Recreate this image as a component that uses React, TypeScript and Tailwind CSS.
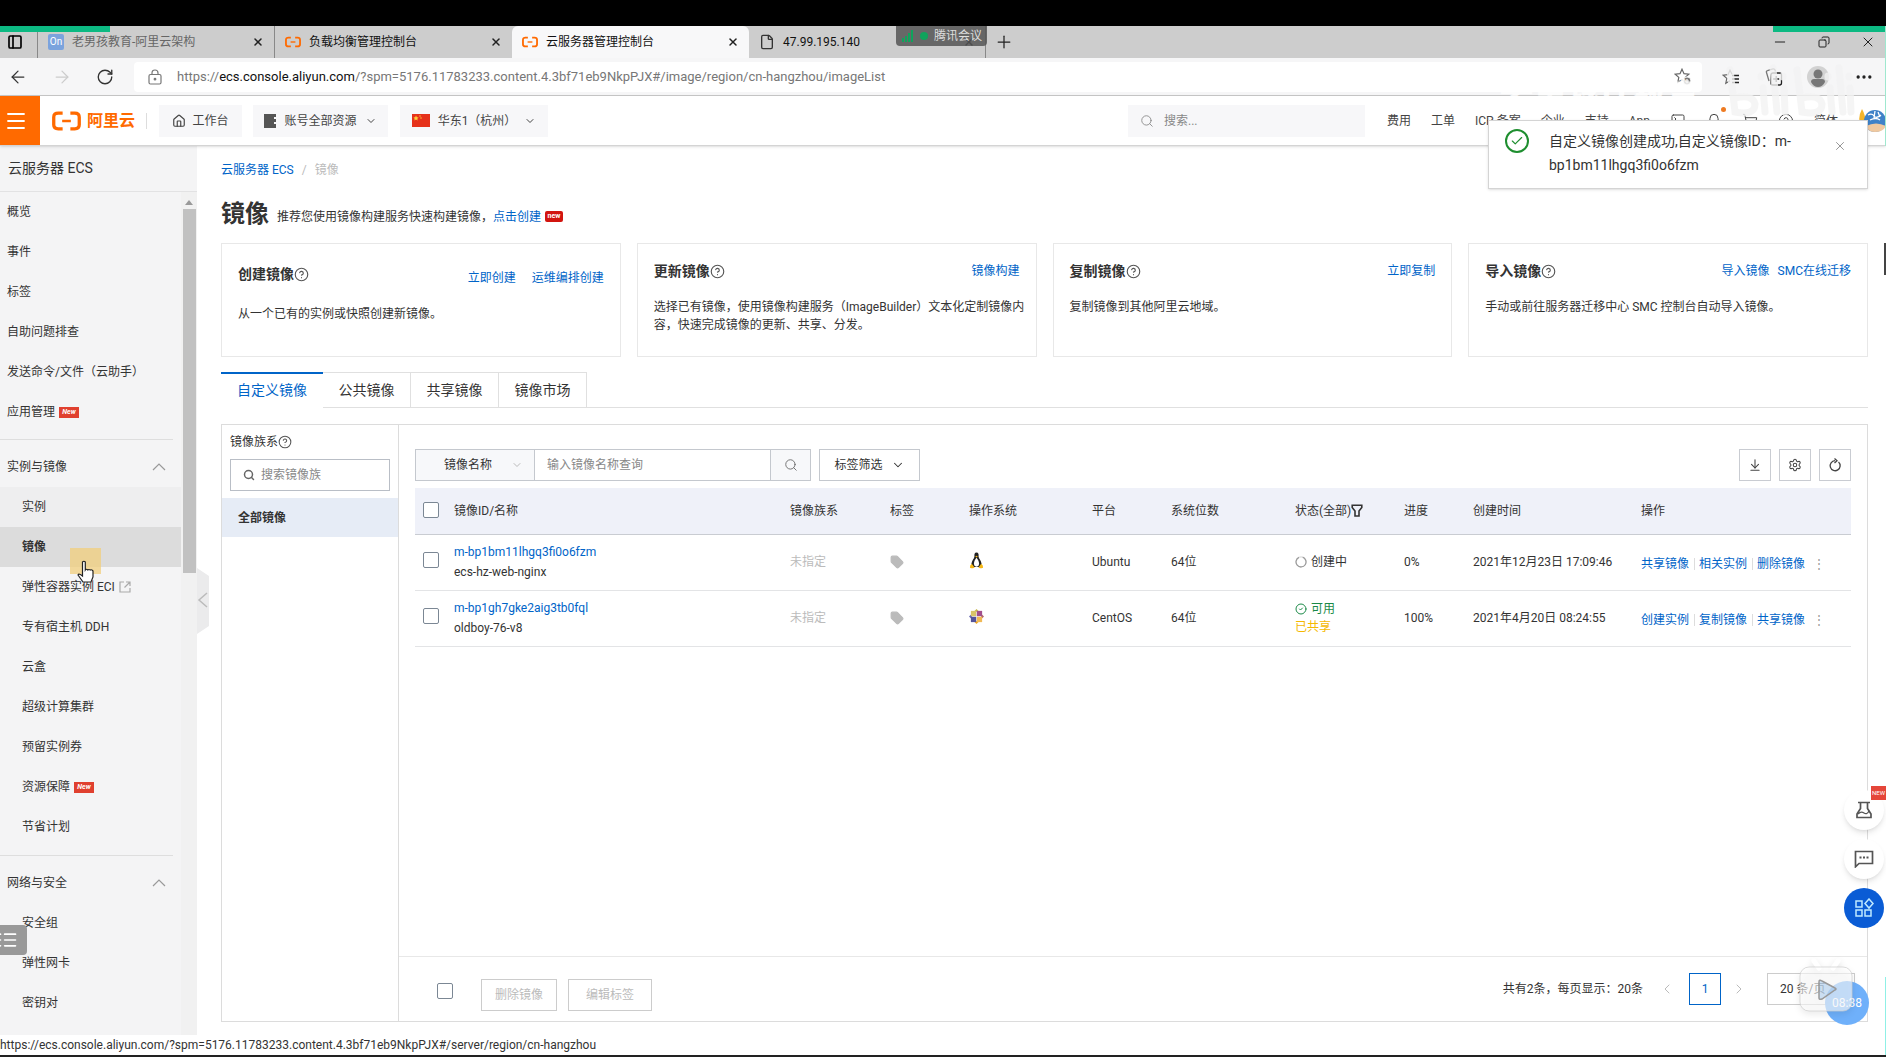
import React from 'react';
import {
  ArrowLeft, ArrowRight, RotateCw, X, Plus, Minus, File, PanelLeft, Copy, MoreHorizontal,
  Menu, House, ChevronDown, ChevronLeft, ChevronRight, Search, CircleHelp, Bell, SquareTerminal,
  ShoppingCart, Tag, ArrowDownToLine, Settings, Check, List, CircleCheck,
} from 'lucide-react';

const cards = [
  { title: '创建镜像', links: ['立即创建', '运维编排创建'], text: '从一个已有的实例或快照创建新镜像。', first: true },
  { title: '更新镜像', links: ['镜像构建'], text: '选择已有镜像，使用镜像构建服务（ImageBuilder）文本化定制镜像内容，快速完成镜像的更新、共享、分发。' },
  { title: '复制镜像', links: ['立即复制'], text: '复制镜像到其他阿里云地域。' },
  { title: '导入镜像', links: ['导入镜像', 'SMC在线迁移'], text: '手动或前往服务器迁移中心 SMC 控制台自动导入镜像。' },
];

const topItems = [
  { name: '概览' },
  { name: '事件' },
  { name: '标签' },
  { name: '自助问题排查' },
  { name: '发送命令/文件（云助手）' },
  { name: '应用管理', isNew: true },
];

const instanceItems = [
  { name: '实例', hover: true },
  { name: '镜像', active: true },
  { name: '弹性容器实例 ECI', external: true },
  { name: '专有宿主机 DDH' },
  { name: '云盒' },
  { name: '超级计算集群' },
  { name: '预留实例券' },
  { name: '资源保障', isNew: true },
  { name: '节省计划' },
];

const networkItems = [{ name: '安全组' }, { name: '弹性网卡' }, { name: '密钥对' }];

const images = [
  {
    id: 'm-bp1bm11lhgq3fi0o6fzm', name: 'ecs-hz-web-nginx', platform: 'Ubuntu', progress: '0%',
    time: '2021年12月23日 17:09:46', ready: false, actions: ['共享镜像', '相关实例', '删除镜像'],
  },
  {
    id: 'm-bp1gh7gke2aig3tb0fql', name: 'oldboy-76-v8', platform: 'CentOS', progress: '100%',
    time: '2021年4月20日 08:24:55', ready: true, actions: ['创建实例', '复制镜像', '共享镜像'],
  },
];

function AliLogo({ className }: { className: string }) {
  return (
    <svg viewBox="0 0 30 20" className={className} fill="none" stroke="#ff6a00" strokeWidth="3.4">
      <path d="M11 1.8H6.5Q1.8 1.8 1.8 6v8q0 4.2 4.7 4.2H11" />
      <path d="M19 1.8h4.5q4.7 0 4.7 4.2v8q0 4.2-4.7 4.2H19" />
      <path d="M10.5 10h9" strokeWidth="2.6" />
    </svg>
  );
}

function Tux() {
  return (
    <svg viewBox="0 0 16 18" className="w-[15px] h-[17px]">
      <path d="M8 0.5C5.8 0.5 5.6 2.4 5.8 4.6C5.8 6.4 3 9 2.6 12.5L4 16h8l1.4-3.5C13 9 10.2 6.4 10.2 4.6C10.4 2.4 10.2 0.5 8 0.5Z" fill="#222" />
      <path d="M8 6C6.6 7.6 5.2 10 5.2 12.6Q5.4 15.4 8 15.6Q10.6 15.4 10.8 12.6C10.8 10 9.4 7.6 8 6Z" fill="#fff" />
      <path d="M6.6 4.6L8 4l1.4.6L8 5.9Z" fill="#f5b817" />
      <path d="M3 12.4L6 16.4Q4.6 18 1 16.6Q.6 14 3 12.4ZM13 12.4L10 16.4Q11.4 18 15 16.6Q15.4 14 13 12.4Z" fill="#f5b817" />
    </svg>
  );
}

function CentOs() {
  return (
    <svg viewBox="0 0 16 16" className="w-[15px] h-[15px]">
      <path d="M8 0l3 3H5Z" fill="#c8b84a" />
      <path d="M16 8l-3 3V5Z" fill="#b46a6a" />
      <path d="M8 16l-3-3h6Z" fill="#efa724" />
      <path d="M0 8l3-3v6Z" fill="#6a6ab0" />
      <path d="M2 2h5.7v5.7H2Z" fill="#d9c568" />
      <path d="M8.3 2H14v5.7H8.3Z" fill="#a14f8c" />
      <path d="M8.3 8.3H14V14H8.3Z" fill="#f1b955" />
      <path d="M2 8.3h5.7V14H2Z" fill="#54549a" />
    </svg>
  );
}

function StarAdd() {
  return (
    <svg viewBox="0 0 18 18" className="w-[18px] h-[18px]" fill="none" stroke="#666" strokeWidth="1.2">
      <path d="M8 1.2l2 4.5 4.8.5-3.6 3.2 1 4.8L8 11.8l-4.2 2.4 1-4.8L1.2 6.2 6 5.7Z" />
      <circle cx="13" cy="13" r="4" fill="#777" stroke="#fff" />
      <path d="M13 11v4M11 13h4" stroke="#fff" />
    </svg>
  );
}

function StarList() {
  return (
    <svg viewBox="0 0 18 16" className="w-[18px] h-4" fill="none" stroke="#666" strokeWidth="1.2">
      <path d="M8 11.8l-4.2 2.4 1-4.8L1.2 6.2 6 5.7 8 1.2l2 4" />
      <path d="M10 6.5h7M10 10h7M10 13.5h7" stroke="#222" strokeWidth="1.4" />
    </svg>
  );
}

function Collections() {
  return (
    <svg viewBox="0 0 18 18" className="w-[18px] h-[18px]" fill="none" strokeWidth="1.3">
      <path d="M4 13L1.5 4.5Q1 3 2.5 2.6L8 1q1.5-.4 2 1l.5 1.5" stroke="#777" />
      <rect x="6" y="5" width="10.5" height="12" rx="2" stroke="#222" />
      <path d="M11.2 8v6M8.2 11h6" stroke="#222" />
    </svg>
  );
}

function NewBadge() {
  return (
    <span className="ml-1 w-5 h-[11px] bg-[#e0402f] text-white text-[7px] leading-[11px] font-bold italic text-center">New</span>
  );
}

function Tick({ label, className = '' }: { label: string; className?: string }) {
  return (
    <input
      type="checkbox"
      aria-label={label}
      className={`appearance-none block w-4 h-4 bg-white border border-[#7b8794] rounded-[2px] ${className}`}
    />
  );
}

function BrowserTab({ title, icon, active, muted, last }: {
  title: string; icon: React.ReactNode; active?: boolean; muted?: boolean; last?: boolean;
}) {
  return (
    <div
      className={`w-[237px] flex items-center gap-2 px-[10px] ${
        active ? 'bg-[#f8f8f9] rounded-t-md' : ''
      } ${muted || last ? 'border-r border-[#888]' : ''}`}
    >
      <span className="w-4 flex justify-center">{icon}</span>
      <span className={`flex-1 text-[12px] ${muted ? 'text-[#666]' : 'text-[#111]'}`}>{title}</span>
      <button aria-label="关闭标签页"><X className="w-3 h-3 text-[#222]" strokeWidth={3} /></button>
    </div>
  );
}

function Browser() {
  return (
    <header className="flex-shrink-0">
      <div className="h-[26px] bg-black" />
      <div className="h-8 bg-[#cdcdcd] flex">
        <div className="w-[38px] pr-2 flex items-center justify-center border-r border-[#888]">
          <PanelLeft className="w-4 h-4 text-black" strokeWidth={2.5} />
        </div>
        <BrowserTab
          title="老男孩教育-阿里云架构"
          muted
          icon={<span className="w-4 h-4 rounded-[2px] bg-[#7ba3dd] text-white text-[10px] leading-4 text-center">On</span>}
        />
        <BrowserTab title="负载均衡管理控制台" icon={<AliLogo className="w-4 h-3" />} />
        <BrowserTab title="云服务器管理控制台" active icon={<AliLogo className="w-4 h-3" />} />
        <BrowserTab title="47.99.195.140" last icon={<File className="w-4 h-4 text-[#333]" />} />
        <button className="px-2" aria-label="新建标签页"><Plus className="w-5 h-5 text-[#222]" strokeWidth={1.5} /></button>
        <div className="ml-auto flex items-center gap-[30px] pr-[10px] text-[#222]">
          <button aria-label="最小化"><Minus className="w-4 h-4" strokeWidth={1.5} /></button>
          <button aria-label="还原"><Copy className="w-3 h-3 -scale-x-100" strokeWidth={2} /></button>
          <button aria-label="关闭"><X className="w-4 h-4" strokeWidth={1.5} /></button>
        </div>
      </div>

      <div className="h-[38px] bg-[#f6f6f7] border-b border-[#c8c8c8] flex items-center">
        <div className="w-[134px] flex items-center gap-6 pl-2">
          <button aria-label="后退"><ArrowLeft className="w-5 h-5 text-[#333]" strokeWidth={1.5} /></button>
          <button aria-label="前进"><ArrowRight className="w-5 h-5 text-[#ccc]" strokeWidth={1.5} /></button>
          <button aria-label="刷新"><RotateCw className="w-[18px] h-[18px] text-[#333]" strokeWidth={1.8} /></button>
        </div>
        <div className="flex-1 h-[30px] bg-white rounded flex items-center pl-[14px] pr-[10px]">
          <svg viewBox="0 0 14 16" className="w-3.5 h-4" fill="none" stroke="#777" strokeWidth="1.2">
            <rect x="1" y="5.5" width="12" height="9.5" rx="1.5" />
            <path d="M4 5.5V4q0-3 3-3t3 3v1.5" />
            <circle cx="7" cy="10.2" r=".8" fill="#777" />
          </svg>
          <div className="ml-[15px] flex-1 text-[13px] text-[#777] whitespace-nowrap">
            https://<span className="text-[#111]">ecs.console.aliyun.com</span>/?spm=5176.11783233.content.4.3bf71eb9NkpPJX#/image/region/cn-hangzhou/imageList
          </div>
          <StarAdd />
        </div>
        <div className="w-[184px] pl-5 pr-3 flex items-center justify-between text-[#444]">
          <StarList />
          <Collections />
          <svg viewBox="0 0 22 22" className="w-[22px] h-[22px]">
            <circle cx="11" cy="11" r="11" fill="#d2d2d2" />
            <circle cx="11" cy="8" r="4.5" fill="#777" />
            <path d="M4 16q0-3 3-3h8q3 0 3 3q-2.5 5-7 5t-7-5Z" fill="#777" />
          </svg>
          <MoreHorizontal className="w-5 h-5 text-[#222]" />
        </div>
      </div>
    </header>
  );
}

function ConsoleHeader() {
  return (
    <header className="flex-shrink-0 h-[50px] bg-white flex items-center border-b border-[#d4d4d4] shadow-sm z-10 text-[12px] text-[#444]">
      <button className="w-10 h-full bg-[#ff6a00] text-white flex items-center justify-center" aria-label="菜单">
        <Menu className="w-6 h-6 -ml-2" strokeWidth={1.8} />
      </button>
      <a href="#" className="ml-3 w-[94px] flex items-center gap-1.5 text-[16px] font-bold text-[#ff6a00] whitespace-nowrap">
        <AliLogo className="w-[29px] h-5 flex-shrink-0" />阿里云
      </a>
      <span className="w-px h-4 bg-[#ddd]" />
      <button className="ml-3 w-[83px] h-8 bg-[#f7f7f9] flex items-center justify-center gap-1.5">
        <House className="w-3.5 h-3.5" />工作台
      </button>
      <button className="ml-[11px] w-[135px] h-8 bg-[#f7f7f9] flex items-center justify-center gap-2">
        <svg viewBox="0 0 12 14" className="w-3 h-3.5" fill="#555">
          <path d="M0 0h12v3h-2v2h2v3h-2v2h2v4H0Z" />
        </svg>
        账号全部资源
        <ChevronDown className="w-3 h-3" />
      </button>
      <button className="ml-3 w-[148px] h-8 bg-[#f7f7f9] flex items-center justify-center gap-2">
        <svg viewBox="0 0 18 13" className="w-[18px] h-[13px]">
          <rect width="18" height="13" fill="#e6321b" />
          <path d="M4 1.5l.8 1.7 1.8.2-1.3 1.3.3 1.8L4 5.6l-1.6.9.3-1.8L1.4 3.4l1.8-.2Z" fill="#ffd23b" />
          <circle cx="8" cy="2" r=".7" fill="#ffd23b" />
          <circle cx="9" cy="4" r=".7" fill="#ffd23b" />
        </svg>
        华东1（杭州）
        <ChevronDown className="w-3 h-3" />
      </button>

      <label className="ml-auto w-[237px] h-8 bg-[#f7f7f9] flex items-center px-3 gap-2.5">
        <Search className="w-3.5 h-3.5 text-[#888]" strokeWidth={1.5} />
        <input type="search" aria-label="搜索" placeholder="搜索..." className="flex-1 min-w-0 bg-transparent placeholder:text-[#888]" />
      </label>
      <nav className="ml-[22px] w-[499px] flex items-center gap-5 whitespace-nowrap *:flex-shrink-0">
        <a href="#">费用</a>
        <a href="#">工单</a>
        <a href="#">ICP 备案</a>
        <a href="#">企业</a>
        <a href="#">支持</a>
        <a href="#">App</a>
        <SquareTerminal className="w-4 h-4" strokeWidth={1.5} />
        <span className="relative">
          <Bell className="w-4 h-4" strokeWidth={1.5} />
          <span className="absolute -top-1.5 -right-1 w-[5px] h-[5px] rounded-full bg-[#ee7b22]" />
        </span>
        <ShoppingCart className="w-4 h-4" strokeWidth={1.5} />
        <CircleHelp className="w-4 h-4" strokeWidth={1.5} />
        <a href="#">简体</a>
        <svg viewBox="0 0 28 30" className="ml-auto w-7 h-[30px]">
          <path d="M3 20Q-1 12 4 3Q9 12 7 20Z" fill="#f5b52a" />
          <circle cx="17" cy="15" r="11" fill="#3f82c8" />
          <path d="M8 20Q18 15 28 20Q25 26 17 26Q10 26 8 20Z" fill="#f0c9a0" />
          <path d="M10 9q4-2 6 1t7-1M17 5l-1 7M12 14q6-3 10 0M20 6l2 5" stroke="#fff" strokeWidth="1.3" fill="none" />
        </svg>
      </nav>
    </header>
  );
}

function SideItem({ item, sub }: {
  item: { name: string; isNew?: boolean; external?: boolean; active?: boolean; hover?: boolean }; sub?: boolean;
}) {
  return (
    <a
      href="#"
      className={`h-10 flex items-center ${sub ? 'pl-[22px]' : 'pl-[7px]'} ${
        item.active ? 'bg-[#dcdcdc] font-bold' : item.hover ? 'bg-[#eeeeef]' : ''
      }`}
    >
      {item.name}
      {item.isNew && <NewBadge />}
      {item.external && (
        <svg viewBox="0 0 12 12" className="ml-1 w-3 h-3" fill="none" stroke="#aaa" strokeWidth="1.2">
          <path d="M5 1H1v10h10V7M7 1h4v4M11 1L5.5 6.5" />
        </svg>
      )}
    </a>
  );
}

function SideGroup({ name }: { name: string }) {
  return (
    <button className="w-full h-10 flex items-center justify-between pl-[7px] pr-[15px]">
      {name}
      <svg viewBox="0 0 14 8" className="w-3.5 h-2" fill="none" stroke="#999" strokeWidth="1.2"><path d="M1 7l6-6 6 6" /></svg>
    </button>
  );
}

function Sidebar() {
  return (
    <aside className="w-[197px] flex-shrink-0 bg-[#f4f4f5] flex flex-col text-[12px] text-[#333] relative">
      <div className="h-[46px] flex-shrink-0 flex items-center pl-2 border-b border-[#e2e2e3] text-[14px]">云服务器 ECS</div>
      <div className="flex-1 min-h-0 flex">
        <nav className="flex-1 min-w-0 overflow-hidden">
          {topItems.map((item) => <SideItem key={item.name} item={item} />)}
          <hr className="mt-[7px] mb-[7px] mr-2 border-[#dedede]" />
          <SideGroup name="实例与镜像" />
          {instanceItems.map((item) => <SideItem key={item.name} item={item} sub />)}
          <hr className="mt-2 mb-[7px] mr-2 border-[#dedede]" />
          <SideGroup name="网络与安全" />
          {networkItems.map((item) => <SideItem key={item.name} item={item} sub />)}
          <hr className="mt-3 mr-2 border-[#dedede]" />
        </nav>
        <div className="w-4 bg-[#f1f1f1] flex flex-col items-center pt-2">
          <svg viewBox="0 0 8 5" className="w-2 h-[5px]"><path d="M4 0l4 5H0Z" fill="#999" /></svg>
          <div className="mt-1 w-[13px] h-[364px] bg-[#c1c1c1]" />
        </div>
      </div>

      {/* Collapse handle */}
      <button aria-label="收起" className="absolute left-full top-[422px] w-3 h-[66px] flex items-center">
        <svg viewBox="0 0 12 66" className="w-3 h-[66px]" fill="none">
          <path d="M0 0L12 8V58L0 66Z" fill="#ebebec" />
          <path d="M10 25L2 32L10 39" stroke="#bbb" strokeWidth="1.5" />
        </svg>
      </button>

      {/* Outline toggle */}
      <button aria-label="目录" className="absolute left-0 bottom-[102px] w-[27px] h-[30px] rounded-r bg-[#999] flex items-center">
        <List className="w-5 h-5 -ml-0.5 text-white" />
      </button>

      {/* Click highlight and pointer */}
      <svg viewBox="0 0 36 44" className="absolute left-[68px] top-[402px] w-9 h-11 pointer-events-none">
        <rect x="2" y="0" width="31" height="26" fill="#f2cf7c" opacity=".75" />
        <path
          d="M14.5 14q1.5-1.500 2.800 0v8q1-1.500 2.500 0q1-1 2.500 0q1.200-.8 2.700 1v6l-2 5h-8l-5-7q.8-2 4.500 1Z"
          fill="#fff" stroke="#222" strokeWidth="1.2"
        />
      </svg>
    </aside>
  );
}

function Cards() {
  return (
    <div className="grid grid-cols-4 gap-4">
      {cards.map((card) => (
        <section key={card.title} className={`h-[114px] border border-[#e8e8e8] px-4 ${card.first ? 'pt-5' : 'pt-[17px]'}`}>
          <div className={`flex justify-between ${card.first ? 'h-6' : 'h-5'}`}>
            <h2 className="text-[14px] leading-5 font-bold text-[#333] flex items-center self-start">
              {card.title}
              <CircleHelp className="w-[15px] h-[15px] text-[#555]" strokeWidth={1.8} />
            </h2>
            <div className={`flex items-end text-[12px] leading-5 text-[#0064c8] ${card.first ? 'gap-4' : 'gap-2'}`}>
              {card.links.map((link) => <a key={link} href="#">{link}</a>)}
            </div>
          </div>
          <p className="mt-[17px] -mr-3 text-[12px] leading-[18px] text-[#333]">{card.text}</p>
        </section>
      ))}
    </div>
  );
}

function ImageTable() {
  return (
    <table className="w-full table-fixed text-left text-[12px] text-[#333]">
      <colgroup>
        <col className="w-[39px]" />
        <col />
        <col className="w-[100px]" />
        <col className="w-[79px]" />
        <col className="w-[123px]" />
        <col className="w-[79px]" />
        <col className="w-[124px]" />
        <col className="w-[109px]" />
        <col className="w-[69px]" />
        <col className="w-[168px]" />
        <col className="w-[210px]" />
      </colgroup>
      <thead>
        <tr className="h-[46px] bg-[#eff1f9] border-b border-[#c9ccd2]">
          <th className="pl-2 pb-0.5"><Tick label="全选" /></th>
          <th className="font-normal">镜像ID/名称</th>
          <th className="font-normal">镜像族系</th>
          <th className="font-normal">标签</th>
          <th className="font-normal">操作系统</th>
          <th className="font-normal">平台</th>
          <th className="font-normal">系统位数</th>
          <th className="font-normal">
            <span className="flex items-center">
              状态(全部)
              <svg viewBox="0 0 12 13" className="w-3 h-[13px]" fill="none" stroke="#333" strokeWidth="1.6">
                <path d="M1.2 1.2h9.6v2.3L8 7v5H4V7L1.2 3.5Z" />
              </svg>
            </span>
          </th>
          <th className="font-normal">进度</th>
          <th className="font-normal">创建时间</th>
          <th className="font-normal">操作</th>
        </tr>
      </thead>
      <tbody>
        {images.map((image) => (
          <tr key={image.id} className="h-14 border-b border-[#e3e4e6]">
            <td className="pl-2 pb-1"><Tick label={image.id} /></td>
            <td className="leading-5">
              <a href="#" className="block text-[#0064c8]">{image.id}</a>
              {image.name}
            </td>
            <td className="text-[#bbb]">未指定</td>
            <td><Tag className="w-3.5 h-3.5 text-[#bbb]" fill="#bbb" /></td>
            <td className="pb-1">{image.ready ? <CentOs /> : <Tux />}</td>
            <td>{image.platform}</td>
            <td>64位</td>
            <td className="leading-[18px]">
              {image.ready ? (
                <>
                  <span className="flex items-center gap-1 text-[#1b8a48]"><CircleCheck className="w-3 h-3" />可用</span>
                  <span className="block text-[#f5b800]">已共享</span>
                </>
              ) : (
                <span className="flex items-center gap-1">
                  <svg viewBox="0 0 12 12" className="w-3 h-3" fill="none" stroke="#999" strokeWidth="1.3">
                    <path d="M7.5 1.2A5 5 0 1 1 4 1.4" />
                    <path d="M4 1.4A5 5 0 0 1 7.5 1.2" stroke="#ddd" />
                  </svg>
                  创建中
                </span>
              )}
            </td>
            <td>{image.progress}</td>
            <td>{image.time}</td>
            <td>
              <div className="flex items-center pt-1 text-[#0064c8]">
                {image.actions.map((action, i) => (
                  <a key={action} href="#" className={i > 0 ? 'ml-[5px] pl-1 border-l border-[#ddd] leading-3' : 'leading-3'}>{action}</a>
                ))}
                <button aria-label="更多" className="ml-2 text-[#999]">⋮</button>
              </div>
            </td>
          </tr>
        ))}
      </tbody>
    </table>
  );
}

function Toolbar() {
  return (
    <div className="flex items-center h-8">
      <label className="relative w-[120px] h-8">
        <select
          aria-label="搜索条件"
          className="appearance-none w-full h-8 border border-[#c4c8ce] bg-[#f7f8fa] pl-7 text-[12px] text-[#333]"
        >
          <option>镜像名称</option>
        </select>
        <ChevronDown className="absolute right-3 top-2.5 w-3 h-3 text-[#bbb] pointer-events-none" />
      </label>
      <input
        type="text"
        aria-label="镜像名称"
        placeholder="输入镜像名称查询"
        className="w-[235px] h-8 border-y border-[#c4c8ce] px-3 text-[12px] placeholder:text-[#888]"
      />
      <button aria-label="搜索" className="w-[41px] h-8 border border-[#c4c8ce] bg-[#f7f8fa] flex items-center justify-center">
        <Search className="w-3.5 h-3.5 text-[#666]" strokeWidth={1.5} />
      </button>
      <button className="ml-2 w-[101px] h-8 border border-[#c4c8ce] flex items-center justify-center gap-2 text-[12px] text-[#333]">
        标签筛选<ChevronDown className="w-3.5 h-3.5" strokeWidth={1.8} />
      </button>
      <div className="ml-auto flex gap-2 text-[#444]">
        <button aria-label="导出" className="w-8 h-8 border border-[#c9ccd2] flex items-center justify-center">
          <ArrowDownToLine className="w-3.5 h-3.5" strokeWidth={1.8} />
        </button>
        <button aria-label="设置" className="w-8 h-8 border border-[#c9ccd2] flex items-center justify-center">
          <Settings className="w-3.5 h-3.5" strokeWidth={1.8} />
        </button>
        <button aria-label="刷新" className="w-8 h-8 border border-[#c9ccd2] flex items-center justify-center">
          <svg viewBox="0 0 14 14" className="w-3.5 h-3.5" fill="none" stroke="#444" strokeWidth="1.3">
            <path d="M10.5 4A5 5 0 1 1 7 2.7" />
            <path d="M6.5 .6L9 2.8L6.5 5" />
          </svg>
        </button>
      </div>
    </div>
  );
}

function Pager() {
  return (
    <footer className="h-[65px] pt-1 flex-shrink-0 border-t border-[#e8e8e8] flex items-center text-[12px] text-[#333]">
      <Tick label="选择本页" className="ml-[38px]" />
      <button disabled className="ml-7 mt-2 w-[76px] h-8 border border-[#ccc] text-[#bbb]">删除镜像</button>
      <button disabled className="ml-[11px] mt-2 w-[84px] h-8 border border-[#ccc] text-[#bbb]">编辑标签</button>
      <div className="ml-auto mb-1 flex items-center">
        <span>共有2条，每页显示：20条</span>
        <button aria-label="上一页" className="ml-4"><ChevronLeft className="w-4 h-4 text-[#bbb]" strokeWidth={1.5} /></button>
        <button className="ml-3.5 w-8 h-8 border border-[#0064c8] text-[#0064c8]">1</button>
        <button aria-label="下一页" className="ml-2.5"><ChevronRight className="w-4 h-4 text-[#bbb]" strokeWidth={1.5} /></button>
        <select aria-label="每页条数" className="appearance-none ml-5 w-[88px] h-8 border border-[#ccc] pl-3 mr-3">
          <option>20 条/页</option>
        </select>
      </div>
    </footer>
  );
}

function Content() {
  return (
    <main className="flex-1 min-w-0 flex flex-col bg-white pl-6 pr-[18px] pb-[35px]">
      <nav className="h-12 flex items-center gap-2 text-[12px] text-[#bbb]">
        <a href="#" className="text-[#0064c8]">云服务器 ECS</a>
        <span>/</span>
        <span>镜像</span>
      </nav>
      <div className="h-[49px] pb-[10px] flex items-center">
        <h1 className="text-[24px] font-bold text-[#333]">镜像</h1>
        <p className="ml-2 mt-1.5 text-[12px] text-[#333]">
          推荐您使用镜像构建服务快速构建镜像，<a href="#" className="text-[#0064c8]">点击创建</a>
        </p>
        <span className="ml-1 mt-1.5 w-[18px] h-[11px] rounded-[2px] bg-[#d2150f] text-white text-[7px] leading-[11px] font-bold text-center">new</span>
      </div>
      <Cards />

      <div role="tablist" className="mt-[15px] h-9 flex text-[14px] text-[#333]">
        <button role="tab" aria-selected="true" className="w-[102px] pb-0.5 border-t-2 border-[#0064c8] text-[#0064c8]">自定义镜像</button>
        {['公共镜像', '共享镜像', '镜像市场'].map((tab) => (
          <button key={tab} role="tab" aria-selected="false" className="w-[88px] border-t border-r border-b border-[#e0e0e0]">{tab}</button>
        ))}
        <div className="flex-1 border-b border-[#e0e0e0]" />
      </div>

      <div className="mt-4 flex-1 min-h-0 border border-[#dcdcdc] flex">
        <section className="w-[177px] flex-shrink-0 border-r border-[#dcdcdc] text-[12px] text-[#333]">
          <div className="px-2 pt-2">
            <h3 className="h-[26px] leading-[18px] flex items-start">
              镜像族系<CircleHelp className="mt-0.5 w-3.5 h-3.5 text-[#555]" strokeWidth={1.8} />
            </h3>
            <label className="h-8 border border-[#b9bec6] flex items-center pl-3 gap-1.5">
              <Search className="w-3 h-3 text-[#666] flex-shrink-0" strokeWidth={3} />
              <input type="text" aria-label="搜索镜像族" placeholder="搜索镜像族" className="flex-1 min-w-0 placeholder:text-[#888]" />
            </label>
          </div>
          <button className="mt-[7px] w-full h-[39px] bg-[#e6ecf6] pl-4 text-left font-bold">全部镜像</button>
        </section>
        <section className="flex-1 min-w-0 flex flex-col">
          <div className="flex-1 px-4 pt-6">
            <Toolbar />
            <div className="mt-[7px]"><ImageTable /></div>
          </div>
          <Pager />
        </section>
      </div>
    </main>
  );
}

function Toast() {
  return (
    <div role="status" className="absolute right-[18px] top-[120px] w-[380px] h-[69px] z-20 bg-white border border-[#d4d4d4] shadow flex pl-4 pt-2">
      <span className="w-6 h-6 rounded-full border-2 border-[#1e8e2f] text-[#1e8e2f] flex items-center justify-center">
        <Check className="w-3.5 h-3.5" strokeWidth={2} />
      </span>
      <p className="ml-5 w-[260px] text-[14px] leading-6 text-[#333]">
        自定义镜像创建成功,自定义镜像ID：m-<br />bp1bm11lhgq3fi0o6fzm
      </p>
      <button aria-label="关闭" className="ml-auto mr-5 self-start mt-2.5"><X className="w-3.5 h-3.5 text-[#888]" strokeWidth={1.5} /></button>
    </div>
  );
}

function FloatingTools() {
  return (
    <div className="absolute right-0.5 top-[790px] z-20 flex flex-col gap-[9px]">
      <button aria-label="实验" className="w-10 h-10 rounded-full bg-white shadow-md flex items-center justify-center">
        <svg viewBox="0 0 18 18" className="w-[18px] h-[18px]" fill="none" stroke="#555" strokeWidth="1.7">
          <path d="M3 1.5h12M5.5 1.5v6L2 13v3.5h14V13l-3.5-5.5v-6" />
          <path d="M3 13q3-3 6-1t5-2" strokeWidth="1.3" />
        </svg>
      </button>
      <button aria-label="反馈" className="w-10 h-10 rounded-full bg-white shadow-md flex items-center justify-center">
        <svg viewBox="0 0 20 18" className="w-5 h-[18px]" fill="none" stroke="#555" strokeWidth="1.7">
          <path d="M1.5 1.5h17v12H5l-3.5 3.3Z" />
          <path d="M5.5 7.5h2M9 7.5h2M12.5 7.5h2" strokeWidth="2.2" />
        </svg>
      </button>
      <button aria-label="应用" className="w-10 h-10 rounded-full bg-[#0a5cd5] flex items-center justify-center">
        <svg viewBox="0 0 20 20" className="w-5 h-5" fill="none" stroke="#bfe9ff" strokeWidth="1.5">
          <path d="M2 3h6v6H2ZM2 12h6v6H2ZM11 12h6v6h-6ZM15 1l4 4.5L15 10l-4-4.5Z" />
        </svg>
      </button>
      <span className="absolute -top-1 -right-0.5 w-[15px] h-[14px] bg-[#e5463a] text-white text-[6px] leading-[14px] text-center">NEW</span>
    </div>
  );
}

function PlayerOverlay() {
  return (
    <>
      <div className="absolute right-[17px] bottom-8 z-20 w-11 h-11 rounded-full bg-[#6fb0fa] text-white text-[12px] leading-[44px] text-center">08:38</div>
      <svg viewBox="0 0 54 54" className="absolute right-[33px] bottom-[45px] z-20 w-[54px] h-[54px] drop-shadow-md" fill="none">
        <path d="M15 3l5 7M39 3l-5 7" stroke="#fff" strokeWidth="5" strokeLinecap="round" />
        <rect x="1" y="9" width="52" height="44" rx="9" fill="#fff" fillOpacity=".6" stroke="#ccc" strokeOpacity=".7" />
        <path d="M20 24q0-3 3-1l13 7q2 1 0 2l-13 9q-3 1-3-1Z" fill="#8ab8e8" fillOpacity=".4" stroke="#999" strokeWidth="1.5" />
      </svg>
    </>
  );
}

export default function App() {
  return (
    <div className="relative h-screen flex flex-col overflow-hidden bg-white font-['Roboto','Noto_Sans_CJK_SC',sans-serif]">
      <Browser />
      <ConsoleHeader />
      <div className="flex-1 min-h-0 flex">
        <Sidebar />
        <Content />
      </div>

      {/* Screen-share frame */}
      <div className="absolute left-0 top-[26px] w-[110px] h-1.5 bg-[#0cb982]" />
      <div className="absolute right-0 top-[26px] w-[113px] h-1.5 bg-[#0cb982]" />
      <div className="absolute right-0 top-[26px] z-20 w-px h-[120px] bg-[#9fe8cf]" />
      <div className="absolute right-0 bottom-0 z-20 w-px h-20 bg-[#8ff0e6]" />
      <div className="absolute left-[896px] top-[26px] w-[91px] h-5 rounded-b bg-[#555]/85 flex items-center gap-1.5 pl-1.5 text-[12px] text-[#ddd]">
        <svg viewBox="0 0 12 12" className="w-3 h-3" fill="#10a35c"><path d="M0 8h2v4H0ZM3 6h2v6H3ZM6 3h2v9H6ZM9 0h2v12H9Z" /></svg>
        <span className="w-2 h-2 rounded-full bg-[#10a35c]" />
        腾讯会议
      </div>

      {/* Stream watermark */}
      <div className="absolute right-[186px] top-[80px] z-10 text-[34px] leading-8 font-bold text-white/80 whitespace-nowrap pointer-events-none">老男孩IT教育</div>
      <svg viewBox="0 0 130 58" className="absolute right-[31px] top-[62px] z-10 w-[130px] h-[58px] pointer-events-none" fill="none" stroke="#f3f3f3" strokeOpacity=".8" strokeWidth="7" strokeLinecap="round">
        <path d="M5 8L10 50Q30 54 30 42Q28 32 10 36M38 26l2 24M36 14v1M48 6l4 44M59 26l1 24M58 14v1" />
        <path d="M72 8L77 50Q97 54 97 42Q95 32 77 36M105 26l2 24M103 14v1M114 6l4 44M125 26l1 24M124 14v1" />
      </svg>

      <Toast />
      <FloatingTools />
      <PlayerOverlay />
      <div className="absolute left-0 bottom-0.5 z-20 w-[575px] h-5 bg-white text-[12px] leading-5 text-[#333] whitespace-nowrap">
        https://ecs.console.aliyun.com/?spm=5176.11783233.content.4.3bf71eb9NkpPJX#/server/region/cn-hangzhou
      </div>
      <div className="absolute inset-x-0 bottom-0 z-20 h-0.5 bg-[#222]" />
      <div className="absolute right-0 top-[243px] w-0.5 h-8 bg-[#444]" />
    </div>
  );
}
